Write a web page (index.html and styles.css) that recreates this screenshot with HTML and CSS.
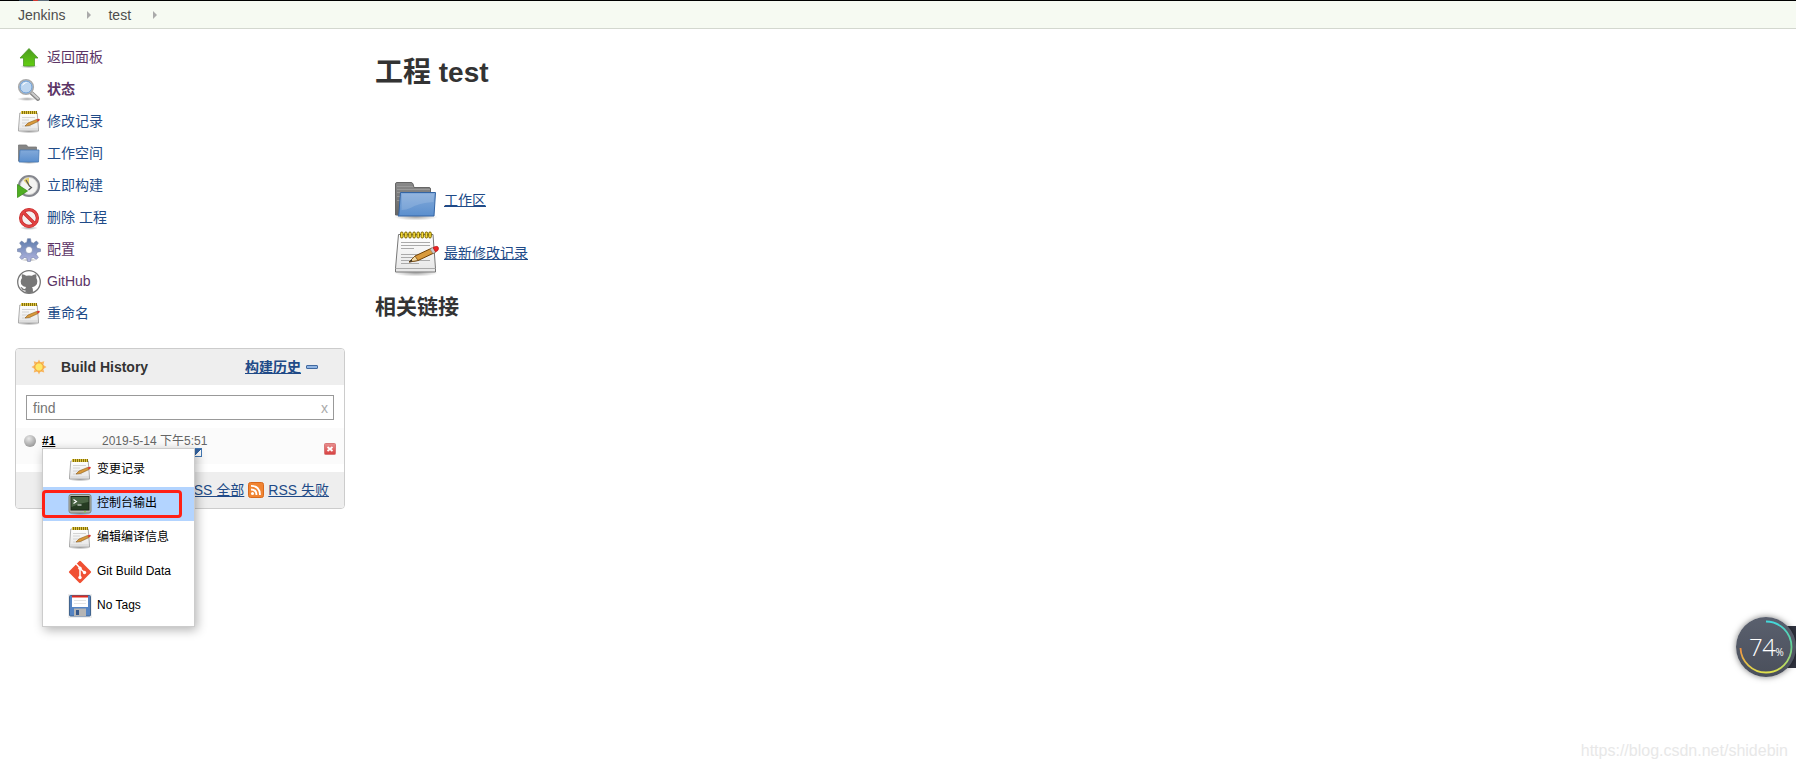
FILE: index.html
```html
<!DOCTYPE html>
<html lang="zh-CN">
<head>
    <meta charset="UTF-8">
    <title>test [Jenkins]</title>
    <link rel="stylesheet" href="styles.css">
</head>
<body>
    <!-- shared icons -->
    <svg class="icon-defs" aria-hidden="true">
        <defs>
            <linearGradient id="g-green" x1="0" y1="0" x2="0" y2="1"><stop offset="0" stop-color="#4b9a20"/><stop offset="1" stop-color="#62cf10"/></linearGradient>
            <linearGradient id="g-blue" x1="0" y1="0" x2="0" y2="1"><stop offset="0" stop-color="#83aada"/><stop offset="1" stop-color="#5b8fce"/></linearGradient>
            <linearGradient id="g-gray" x1="0" y1="0" x2="0" y2="1"><stop offset="0" stop-color="#8a8a8a"/><stop offset="1" stop-color="#666"/></linearGradient>
            <linearGradient id="g-gear" x1="0" y1="0" x2="0" y2="1"><stop offset="0" stop-color="#5b7aaa"/><stop offset="1" stop-color="#b4b6e0"/></linearGradient>
            <linearGradient id="g-paper" x1="0" y1="0" x2="0" y2="1"><stop offset="0" stop-color="#fff"/><stop offset="1" stop-color="#e6e6e6"/></linearGradient>
            <linearGradient id="g-stop" x1="0" y1="0" x2="0" y2="1"><stop offset="0" stop-color="#e89090"/><stop offset="1" stop-color="#d84040"/></linearGradient>
            <radialGradient id="g-ball" cx=".4" cy=".3" r=".7"><stop offset="0" stop-color="#e8e8e8"/><stop offset="1" stop-color="#9a9a9a"/></radialGradient>
            <radialGradient id="g-shadow"><stop offset="0" stop-color="#000" stop-opacity=".35"/><stop offset="1" stop-color="#000" stop-opacity="0"/></radialGradient>
            <symbol id="notepad" viewBox="0 0 48 48">
                <ellipse cx="24" cy="44" rx="22" ry="3.5" fill="url(#g-shadow)"/>
                <path d="M6.500 5.500h34.500l2.500 34v3.500h-40v-3.500z" fill="url(#g-paper)" stroke="#777"/>
                <path d="M4 39.500h39" stroke="#aaa"/>
                <path d="M9 13.500h29M9 16.500h29M9 19.500h13M9 25.500h29M9 28.500h22M9 31.500h29M9 34.500h18" stroke="#aaa"/>
                <g fill="#f6dc3a" stroke="#7b6500" stroke-width="1">
                    <rect x="8.500" y="3" width="2.600" height="6" rx="1.300"/><rect x="12.600" y="3" width="2.600" height="6" rx="1.300"/><rect x="16.700" y="3" width="2.600" height="6" rx="1.300"/><rect x="20.800" y="3" width="2.600" height="6" rx="1.300"/><rect x="24.900" y="3" width="2.600" height="6" rx="1.300"/><rect x="29" y="3" width="2.600" height="6" rx="1.300"/><rect x="33.100" y="3" width="2.600" height="6" rx="1.300"/><rect x="36.700" y="3" width="2.600" height="6" rx="1.300"/>
                </g>
                <path d="M17 33l6-6 17-8 3 4.500-17 8z" fill="#d99a3c" stroke="#704208"/>
                <path d="M17 33l6-6 3 4.500z" fill="#f3dba6" stroke="#704208" stroke-width=".7"/>
                <path d="M17 33l2.500-2.300 1 1.500z" fill="#222"/>
                <path d="M38 20l3-1.500 3 4.500-3 1.500z" fill="#ccc" stroke="#777" stroke-width=".5"/>
                <path d="M41 18.500q5-2.500 5.500.5.500 2.500-3 4z" fill="#e22" stroke="#a11" stroke-width=".6"/>
            </symbol>
            <!-- 24px version, fewer lines so it stays readable -->
            <symbol id="notepad-small" viewBox="0 0 24 24">
                <ellipse cx="12" cy="21.500" rx="11" ry="2" fill="url(#g-shadow)"/>
                <path d="M2.800 3h17.400l1.300 16v2h-20v-2z" fill="url(#g-paper)" stroke="#999" stroke-width=".8"/>
                <path d="M2 19h19" stroke="#ccc" stroke-width=".7"/>
                <path d="M5 7.500h13M5 10h7M5 13h12M5 16h9" stroke="#ccc" stroke-width=".8"/>
                <path d="M4 2.500h16" stroke="#85700c" stroke-width="3"/>
                <path d="M4 2.500h16" stroke="#dfc544" stroke-width="3" stroke-dasharray="1 1"/>
                <path d="M8 16l3-3 8.500-3.500 1.500 2-8.500 4z" fill="#d99a3c" stroke="#8b5a18" stroke-width=".6"/>
                <path d="M19.500 9.500q3-1.500 3.300 0 .2 1.100-1.800 2z" fill="#db3b30"/>
            </symbol>
            <symbol id="folder" viewBox="0 0 48 48">
                <ellipse cx="24" cy="41" rx="22" ry="3.500" fill="url(#g-shadow)"/>
                <path d="M3.500 8q0-1.500 1.500-1.500h14q1.500 0 2 1.500l1 3.500h15q1.500 0 1.500 1.500v26h-35z" fill="url(#g-gray)" stroke="#666"/>
                <path d="M5 10.500h16M5 13.500h33M5 16.500h5M5 20.500h4M5 24.500h4" stroke="#a3a3a3" stroke-width=".7"/>
                <path d="M8.500 16.500h35l-1.500 23.500h-36q1-1 1-4z" fill="url(#g-blue)" stroke="#3465a4"/>
                <path d="M10 18h32l-.5 8q-15 1-23 6-4 2-9 2z" fill="#fff" opacity=".14"/>
            </symbol>
            <symbol id="folder-small" viewBox="0 0 24 24">
                <ellipse cx="12" cy="20.500" rx="10" ry="1.500" fill="url(#g-shadow)"/>
                <path d="M1.500 3h8l1.500 2h8.500v14h-18z" fill="#858585" stroke="#777" stroke-width=".8"/>
                <path d="M3 8h19l-.5 12H2z" fill="url(#g-blue)" stroke="#4878b4" stroke-width=".8"/>
            </symbol>
            <symbol id="rss" viewBox="0 0 16 16">
                <rect x=".5" y=".5" width="15" height="15" rx="2" fill="#f08432" stroke="#d9691c"/>
                <circle cx="4.500" cy="11.500" r="1.500" fill="#fff"/>
                <path d="M3 7.500q5.500 0 5.500 5.500M3 3.900q9 0 9 9.100" fill="none" stroke="#fff" stroke-width="1.800"/>
            </symbol>
        </defs>
    </svg>

    <header class="breadcrumbs">
        <span class="logo-edge"></span>
        <a href="#">Jenkins</a>
        <i class="arrow"></i>
        <a href="#">test</a>
        <i class="arrow"></i>
    </header>

    <div class="page">
        <aside class="side-panel">
            <nav class="tasks">
                <a class="task visited" href="#">
                    <svg class="icon" viewBox="0 0 24 24"><ellipse cx="12" cy="20.500" rx="9" ry="2" fill="url(#g-shadow)"/><path d="M12 2.500l9 9.500h-3.500v8h-11v-8H3z" fill="url(#g-green)" stroke="#4d9829" stroke-width=".8"/></svg>
                    返回面板
                </a>
                <a class="task visited current" href="#">
                    <svg class="icon" viewBox="0 0 24 24"><ellipse cx="10" cy="21" rx="10" ry="2" fill="url(#g-shadow)"/><path d="M14.500 15l6.500 6" stroke="#888" stroke-width="4" stroke-linecap="round"/><path d="M15 15l6 5.500" stroke="#ccc" stroke-width="2" stroke-linecap="round"/><circle cx="9" cy="9" r="7.300" fill="#bdd6f0" stroke="#aaa" stroke-width="1.600"/><circle cx="9" cy="9" r="6" fill="none" stroke="#6b9dd5"/><path d="M5 8q1-4 6-4-3 1-6 4" fill="#fff"/></svg>
                    状态
                </a>
                <a class="task" href="#"><svg class="icon"><use href="#notepad-small"/></svg>修改记录</a>
                <a class="task" href="#"><svg class="icon"><use href="#folder-small"/></svg>工作空间</a>
                <a class="task" href="#">
                    <svg class="icon" viewBox="0 0 24 24"><circle cx="12" cy="12" r="10" fill="#f4f4f2" stroke="#85878e" stroke-width="2.200"/><circle cx="12" cy="12" r="8.600" fill="none" stroke="#bbb" stroke-width=".6"/><path d="M12 12L6.500 6.500q2-2.500 5.500-3z" fill="#e5cf6a"/><path d="M9 6l3.500 6 2 1.500-3 2.500" fill="none" stroke="#555" stroke-width="1.200"/><path d="M.5 10.500l10 6.500-10 6.500z" fill="#4fae22" stroke="#3b8f16" stroke-width=".8"/></svg>
                    立即构建
                </a>
                <a class="task" href="#">
                    <svg class="icon" viewBox="0 0 24 24"><ellipse cx="12" cy="22" rx="9" ry="2" fill="url(#g-shadow)"/><circle cx="12" cy="12" r="8.400" fill="#f5f0f0" stroke="#c22626" stroke-width="3.200"/><path d="M6.500 6.500l11 11" stroke="#c22626" stroke-width="3.200"/><circle cx="12" cy="12" r="8.400" fill="none" stroke="#e24444" stroke-width="2"/><path d="M6.500 6.500l11 11" stroke="#e24444" stroke-width="2"/></svg>
                    删除 工程
                </a>
                <a class="task visited" href="#">
                    <svg class="icon" viewBox="0 0 24 24"><ellipse cx="12" cy="22" rx="8" ry="1.500" fill="url(#g-shadow)"/><path fill-rule="evenodd" fill="url(#g-gear)" stroke="#7080a5" stroke-width=".6" d="M10.500.7h3l.6 3.500 2.300 1 3-2.200 2 2.100-2.200 3 .9 2.200 3.400.6v2.600l-3.400.7-.9 2.200 2.100 3-2 2-3-2-2.200.9-.7 3.300h-2.800l-.7-3.300-2.200-.9-3 2-2-2 2.100-3-.9-2.200-3.400-.7v-2.600l3.400-.6.9-2.200-2.200-3 2-2.100 3 2.200 2.300-1zM12 8.500a3.500 3.500 0 100 7 3.500 3.500 0 000-7z"/></svg>
                    配置
                </a>
                <a class="task visited" href="#">
                    <svg class="icon" viewBox="0 0 24 24"><circle cx="12" cy="12" r="11.300" fill="#fff" stroke="#777" stroke-width="1.300"/><path fill="#777" d="M5 4.200q2.500.2 4.200 1.600 2.800-.5 5.600 0Q16.500 4.400 19 4.200q.8 1.700.3 3.700 1 1.500 1 3.600 0 4.700-5.300 5.700 1 1 .9 3v2.300q-4 1.200-7.500 0v-2.200q-3 .6-4-1.800-.4-1-1.300-1.400 1.500-.5 2.500 1 1 1.200 2.800.7 0-1 .8-1.700-5.500-.8-5.500-5.600 0-2.100 1.300-3.600-.6-2 0-3.700z"/></svg>
                    GitHub
                </a>
                <a class="task" href="#"><svg class="icon"><use href="#notepad-small"/></svg>重命名</a>
            </nav>

            <section class="history">
                <div class="history-header">
                    <svg class="sun" viewBox="0 0 16 16"><path d="M8 .5l1.500 2.700 3.800-1-.9 3.700L15.500 8l-3.100 2 .9 3.500-3.800-.9L8 15.500l-1.500-2.900-3.800.9.900-3.500L.5 8l3.100-2.100-.9-3.700 3.800 1z" fill="#f8b864"/><circle cx="8" cy="8" r="4.200" fill="#ffe768" stroke="#f3a038"/></svg>
                    <span class="history-title">Build History</span>
                    <a class="trend" href="#">构建历史</a>
                    <i class="collapse"></i>
                </div>
                <div class="search"><span>find</span><span class="clear">x</span></div>
                <div class="build">
                    <svg class="ball" viewBox="0 0 12 12"><circle cx="6" cy="6" r="6" fill="url(#g-ball)"/></svg>
                    <a class="build-number" href="#">#1</a>
                    <span class="build-date">2019-5-14 下午5:51</span>
                    <svg class="stop" viewBox="0 0 12 12"><rect x=".5" y=".5" width="11" height="11" rx="1" fill="url(#g-stop)" stroke="#d87878"/><path d="M3.500 4l5 4M8.500 4l-5 4" stroke="#fff" stroke-width="1.800"/></svg>
                </div>
                <div class="feeds">
                    <svg class="rss"><use href="#rss"/></svg>
                    <a href="#">RSS 全部</a>
                    <svg class="rss"><use href="#rss"/></svg>
                    <a href="#">RSS 失败</a>
                </div>
            </section>
        </aside>

        <main class="main-panel">
            <h1>工程 test</h1>
            <div class="shortcuts">
                <a href="#"><svg><use href="#folder"/></svg><span>工作区</span></a>
                <a href="#"><svg><use href="#notepad"/></svg><span>最新修改记录</span></a>
            </div>
            <h2>相关链接</h2>
        </main>
    </div>

    <!-- build context menu -->
    <i class="menu-anchor"></i>
    <div class="menu">
        <a href="#"><svg class="icon"><use href="#notepad-small"/></svg>变更记录</a>
        <a class="selected" href="#">
            <svg class="icon" viewBox="0 0 24 24"><ellipse cx="12" cy="21.500" rx="11" ry="2" fill="url(#g-shadow)"/><rect x="1" y="2.500" width="22" height="18.500" rx="2" fill="#b4b8af" stroke="#7e8179"/><rect x="3" y="4.500" width="18" height="13.500" fill="#263c22" stroke="#1a2618"/><path d="M3.500 5h17v5q-9 1-17 5z" fill="#5a7552" opacity=".7"/><path d="M5.500 7.500l3 2-3 2M9.500 13h4" fill="none" stroke="#fff" stroke-width="1.100"/><path d="M16 19.800h2" stroke="#7fd33e"/></svg>
            控制台输出
        </a>
        <a href="#"><svg class="icon"><use href="#notepad-small"/></svg>编辑编译信息</a>
        <a href="#">
            <svg class="icon" viewBox="0 0 24 24"><rect x="3.800" y="3.800" width="16.400" height="16.400" rx="1.200" transform="rotate(45 12 12)" fill="#f05033"/><path d="M8 3.800l4 4.200v9.500M12 8.500l4.500 4" fill="none" stroke="#fff" stroke-width="1.500"/><circle cx="12" cy="8.200" r="1.700" fill="#fff"/><circle cx="12" cy="17.500" r="1.700" fill="#fff"/><circle cx="16.500" cy="12.500" r="1.700" fill="#fff"/></svg>
            Git Build Data
        </a>
        <a href="#">
            <svg class="icon" viewBox="0 0 24 24"><path fill="#eee" d="M0 0h24v24H0z"/><rect x="1.500" y="1.500" width="21" height="20.500" rx="1" fill="#5584c3" stroke="#42658f"/><path fill="#fff" d="M4 2h16v11H4z"/><path fill="#dc2a20" d="M4 1.500h16v2H4z"/><path d="M6 6.500h12M6 9.500h12" stroke="#e4e4e4"/><path fill="#b5b5b5" d="M6 14.500h12V22H6z"/><path fill="#36588a" d="M8 16h3v5H8z"/></svg>
            No Tags
        </a>
    </div>
    <div class="highlight-box"></div>

    <div class="monitor-tab"></div>
    <div class="monitor">
        <svg viewBox="0 0 60 60">
            <defs>
                <linearGradient id="g-ring" x1="0" y1="0" x2="0" y2="1"><stop offset="0" stop-color="#43d8dc"/><stop offset=".5" stop-color="#67cf91"/><stop offset="1" stop-color="#dfdf4c"/></linearGradient>
                <linearGradient id="g-ring-end" x1="0" y1="0" x2="0" y2="1"><stop offset="0" stop-color="#ee8d42"/><stop offset="1" stop-color="#dfdf4c"/></linearGradient>
            </defs>
            <path d="M30 4.500a25.500 25.500 0 010 51" fill="none" stroke="url(#g-ring)" stroke-width="1.800"/>
            <path d="M30 55.500A25.500 25.500 0 014.500 31" fill="none" stroke="url(#g-ring-end)" stroke-width="1.800"/>
        </svg>
        <span class="monitor-value">74<small>%</small></span>
    </div>
    <div class="watermark">https://blog.csdn.net/shidebin</div>
</body>
</html>
```
FILE: styles.css
```css
:root {
    --link: #204a87;
    --visited: #5c3566;
    --text: #333;
    --border: #ccc;
}

* {
    box-sizing: border-box;
}

body {
    margin: 0;
    height: 768px;
    position: relative;
    overflow: hidden;
    background: #fff;
    color: var(--text);
    font: 14px/20px "Liberation Sans", "Noto Sans CJK SC", sans-serif;
}

a {
    color: var(--link);
}

svg {
    display: block;
    flex: none;
}

.icon-defs {
    position: absolute;
    width: 0;
    height: 0;
}

.icon {
    width: 24px;
    height: 24px;
}

/* breadcrumbs */
.breadcrumbs {
    height: 29px;
    display: flex;
    align-items: center;
    padding-left: 18px;
    border-top: 1px solid #000;
    border-bottom: 1px solid #d3d7cf;
    background: #f6faf2;
}

.breadcrumbs a {
    color: #4d4d4d;
    text-decoration: none;
}

.logo-edge {
    position: absolute;
    top: 0;
    left: 19px;
    width: 30px;
    height: 1px;
    background: linear-gradient(90deg, #24384a 0 14px, #d33833 14px 19px, #5f6f7c 19px);
}

.arrow {
    border: 4px solid transparent;
    border-left-color: #aaa;
    border-right: 0;
    margin: 0 17px 0 22px;
}

/* side panel */
.page {
    display: flex;
}

.side-panel {
    width: 360px;
    padding: 12px 15px 0;
}

.tasks {
    padding-left: 2px;
}

.task {
    height: 32px;
    display: flex;
    align-items: center;
    gap: 6px;
    text-decoration: none;
}

.task .icon {
    margin-top: 1px;
}

.visited {
    color: var(--visited);
}

.current {
    font-weight: bold;
}

.history {
    width: 330px;
    height: 161px;
    margin-top: 19px;
    border: 1px solid var(--border);
    border-radius: 4px;
    overflow: hidden;
}

.history-header {
    height: 36px;
    display: flex;
    align-items: center;
    padding: 0 26px 0 15px;
    background: #eee;
    font-weight: bold;
}

.sun {
    width: 16px;
    height: 16px;
}

.history-title {
    margin-left: 14px;
}

.trend {
    margin-left: auto;
}

.collapse {
    width: 12px;
    height: 4px;
    margin-left: 5px;
    border: 1px solid #41699f;
    border-radius: 1px;
    background: #91b5e3;
}

.search {
    height: 25px;
    margin: 10px 10px 8px;
    padding: 0 5px 0 6px;
    display: flex;
    align-items: center;
    justify-content: space-between;
    border: 1px solid #999;
    color: #757575;
}

.clear {
    color: #aaa;
}

.build {
    height: 36px;
    display: flex;
    padding: 3px 8px 0;
    background: #fbfbfb;
    font-size: 12px;
}

.ball {
    width: 12px;
    height: 12px;
    margin: 4px 6px 0 0;
}

.build-number {
    width: 60px;
    color: #000;
    font-weight: bold;
}

.build-date {
    color: #666;
}

.stop {
    width: 12px;
    height: 12px;
    margin: 12px 0 0 auto;
}

.feeds {
    height: 36px;
    margin-top: 8px;
    padding-right: 15px;
    display: flex;
    align-items: center;
    justify-content: flex-end;
    gap: 4px;
    background: #eee;
}

.rss {
    width: 16px;
    height: 16px;
}

/* main panel */
.main-panel {
    padding: 24px 0 0 15px;
}

h1 {
    margin: 0;
    font-size: 28px;
    line-height: 40px;
}

.shortcuts {
    padding: 83px 0 0 17px;
}

.shortcuts a {
    width: max-content;
    display: flex;
    align-items: center;
    gap: 4px;
    margin-bottom: 5px;
    color: var(--link);
}

.shortcuts svg {
    width: 48px;
    height: 48px;
}

h2 {
    margin: 15px 0 0;
    font-size: 21px;
    line-height: 30px;
}

/* context menu */
.menu {
    position: absolute;
    top: 448px;
    left: 42px;
    width: 153px;
    padding: 4px 0 3px;
    border: 1px solid var(--border);
    background: #fff;
    box-shadow: 2px 3px 10px rgba(0, 0, 0, 0.3);
}

.menu a {
    height: 34px;
    display: flex;
    align-items: center;
    gap: 5px;
    padding: 0 0 2px 25px;
    color: #000;
    font-size: 12px;
    text-decoration: none;
}

.menu .icon {
    margin-top: 1px;
}

.menu .selected {
    background: #b3d4ff;
}

.menu-anchor {
    position: absolute;
    top: 448px;
    left: 190px;
    width: 12px;
    height: 9px;
    border: 1px solid #4479b5;
    background: linear-gradient(135deg, #3465a4 60%, #fff 60%);
}

.highlight-box {
    position: absolute;
    top: 490px;
    left: 42px;
    width: 140px;
    height: 28px;
    border: 3px solid #ff2015;
    border-radius: 4px;
}

/* floating usage meter */
.monitor-tab {
    position: absolute;
    top: 626px;
    right: 0;
    width: 20px;
    height: 42px;
    background: #303440;
}

.monitor {
    position: absolute;
    top: 617px;
    left: 1736px;
    width: 60px;
    height: 60px;
    border-radius: 50%;
    background: linear-gradient(#5a606e, #4a4f5b);
    box-shadow: 0 0 6px rgba(0, 0, 0, 0.5);
}

.monitor-value {
    position: absolute;
    top: 17px;
    left: 13px;
    color: #fff;
    font: 300 24px/26px "Open Sans", Roboto, sans-serif;
    letter-spacing: -0.5px;
    white-space: nowrap;
}

.monitor-value small {
    font-size: 10px;
    font-weight: 400;
}

.watermark {
    position: absolute;
    right: 8px;
    bottom: 7px;
    color: #e8e8e8;
    font-size: 16px;
}
```
